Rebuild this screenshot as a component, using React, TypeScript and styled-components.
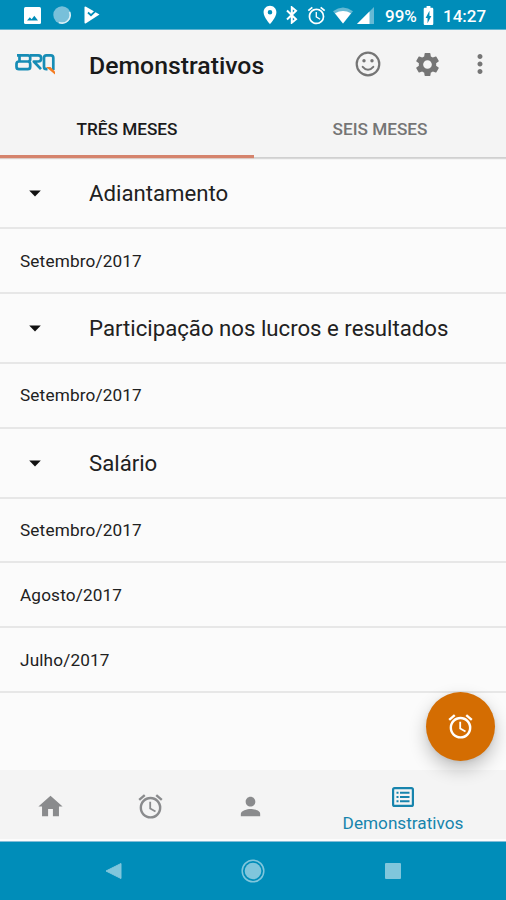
import React from "react";
import styled, { createGlobalStyle } from "styled-components";
import {
  MdAlarm,
  MdBatteryChargingFull,
  MdHome,
  MdMoreVert,
  MdPerson,
  MdPlace,
  MdSettings,
} from "react-icons/md";

const blue = "#008db9";
const bar = "#f4f4f4";

const GlobalStyle = createGlobalStyle`
  * { box-sizing: border-box; }
  body { margin: 0; background: #fafafa; font-family: Roboto, "Liberation Sans", sans-serif; }
  svg { display: block; flex: none; }
`;

const Screen = styled.div`
  position: relative;
  display: flex;
  flex-direction: column;
  width: 506px;
  height: 900px;
  overflow: hidden;
  background: #fbfbfb;
`;

const StatusBar = styled.div`
  display: flex;
  align-items: center;
  height: 30px;
  flex: none;
  padding: 1px 17px 0 24px;
  background: ${blue};
  color: #fff;
  border-bottom: 1px solid #5fb3d0;
`;

const StatusText = styled.span<{ $gap: number; $width: number }>`
  width: ${(p) => p.$width}px;
  margin-left: ${(p) => p.$gap}px;
  font-size: 17px;
  font-weight: 500;
  line-height: 20px;
  padding-top: 2px;
  white-space: nowrap;
`;

const Slot = styled.span<{ $gap?: number }>`
  display: flex;
  margin-left: ${(p) => p.$gap ?? 0}px;
`;

const Spacer = styled.span`
  flex: 1;
`;

const AppBar = styled.header`
  display: flex;
  align-items: center;
  height: 69px;
  flex: none;
  padding-left: 15px;
  padding-right: 11px;
  padding-bottom: 1px;
  background: ${bar};
  color: #757575;
`;

const Title = styled.h1`
  margin: 3px 0 0 33px;
  flex: 1;
  font-size: 24.8px;
  font-weight: 500;
  line-height: 30px;
  color: #1a1a1a;
`;

const Tabs = styled.nav`
  display: grid;
  grid-template-columns: 254px 252px;
  height: 60px;
  flex: none;
  background: ${bar};
`;

const Tab = styled.div<{ $active?: boolean }>`
  display: flex;
  flex-direction: column;
  align-items: center;
  font-size: 17.2px;
  line-height: 20px;
  padding-top: 20px;
  font-weight: 500;
  color: ${(p) => (p.$active ? "#1a1a1a" : "#757575")};
  background: linear-gradient(
    to bottom,
    transparent 56px,
    ${(p) => (p.$active ? "#d5836c" : "transparent")} 56px,
    ${(p) => (p.$active ? "#d5836c" : "transparent")} 58px,
    ${(p) => (p.$active ? "#d5836c" : "#d0d0d0")} 58px,
    ${(p) => (p.$active ? "#d5836c" : "#d0d0d0")} 59px,
    ${(p) => (p.$active ? "#dccbc5" : "#d8d8d8")} 59px
  );
`;

const List = styled.main`
  flex: 1;
  min-height: 0;
  border-top: 1px solid #f3f3f3;
`;

const GroupRow = styled.div`
  display: flex;
  align-items: center;
  height: 70px;
  padding: 1px 0 0 29px;
  font-size: 22.2px;
  color: #212121;
  border-bottom: 2px solid #e7e7e7;

  &:first-child {
    height: 69px;
    padding-top: 0;
  }
`;

const GroupName = styled.span`
  margin-left: 48px;
  padding-bottom: 1px;
`;

const MonthRow = styled.div`
  display: flex;
  align-items: center;
  height: 64.8px;
  padding: 0.4px 0 0 20px;
  font-size: 17.2px;
  letter-spacing: 0.15px;
  color: #212121;
  border-bottom: 2px solid #e7e7e7;
`;

const Fab = styled.button`
  position: absolute;
  left: 426px;
  top: 692px;
  width: 69px;
  height: 69px;
  padding: 0;
  border: 0;
  border-radius: 50%;
  display: flex;
  align-items: center;
  justify-content: center;
  background: #d46d02;
  color: #fff;
  box-shadow: 0 8px 18px rgba(0, 0, 0, 0.24), 0 1px 4px rgba(0, 0, 0, 0.08);
`;

const BottomNav = styled.nav`
  display: grid;
  grid-template-columns: 100px 100px 100px 206px;
  height: 71px;
  flex: none;
  background: ${bar};
  border-bottom: 2px solid #fcfcfc;
  color: #8a8b8d;
`;

const NavItem = styled.div<{ $active?: boolean }>`
  display: flex;
  flex-direction: column;
  align-items: center;
  justify-content: center;
  gap: 6px;
  padding-top: ${(p) => (p.$active ? 11 : 3)}px;
  font-size: 17.2px;
  line-height: 21px;
  color: ${(p) => (p.$active ? "#1784ad" : "inherit")};
`;

const SystemNav = styled.div`
  display: flex;
  align-items: center;
  justify-content: space-between;
  height: 59px;
  flex: none;
  padding: 0 104px;
  background: ${blue};
  border-top: 1px solid #83bdd8;
`;

const groups = [
  { name: "Adiantamento", months: ["Setembro/2017"] },
  { name: "Participação nos lucros e resultados", months: ["Setembro/2017"] },
  { name: "Salário", months: ["Setembro/2017", "Agosto/2017", "Julho/2017"] },
];

const PictureIcon = () => (
  <svg width="17" height="17" viewBox="0 0 17 17">
    <rect width="17" height="17" rx="1.5" fill="#fff" />
    <path d="m3 13.500 2.800-3.200 1.900 2 2.600-3.500 3.700 4.700z" fill={blue} />
  </svg>
);

const SyncDotIcon = () => (
  <svg width="18" height="18" viewBox="0 0 18 18">
    <circle cx="9" cy="9" r="8.700" fill="#78c0da" />
    <path d="M16.500 6A8 8 0 0 1 6 16.400" fill="none" stroke="#d9eff6" strokeWidth="1.600" />
  </svg>
);

const PlayCheckIcon = () => (
  <svg width="16" height="18" viewBox="0 0 16 18">
    <path d="M.5 1.500Q.5 0 2 .7L15.500 8.500 2 17.300Q.5 18 .5 16.500z" fill="#fff" />
    <path d="m4 6.500 3 2.700 5.500-5" fill="none" stroke={blue} strokeWidth="1.800" />
  </svg>
);

const BluetoothIcon = () => (
  <svg width="12" height="18" viewBox="0 0 12 18">
    <path d="m1 4.500 9 8.700L5.800 16.700V1.300L10 4.800 1 13.500" fill="none" stroke="#fff" strokeWidth="2" />
  </svg>
);

const WifiIcon = () => (
  <svg width="20" height="17" viewBox="0 0 20 17">
    <path d="M0 4.200Q10-3.200 20 4.200L10 16.500z" fill="#66b9d4" />
    <path d="M2 6.300Q10 1.500 18 6.300L10 16.500z" fill="#fff" />
  </svg>
);

const SignalIcon = () => (
  <svg width="17" height="17" viewBox="0 0 17 17">
    <path d="M17 0v17H0z" fill="#66b9d4" />
    <path d="M12.500 4.500V17H0z" fill="#fff" />
  </svg>
);

const BrqLogo = () => (
  <svg width="41" height="22" viewBox="0 0 41 22" fill="none" strokeLinejoin="round">
    <g stroke="#168cb5" strokeWidth="2.700">
      <path d="M2 2.300h11q2.200 0 2.200 2.200v1.800q0 2.200-2.200 2.200H4q-2.500 0-2.500 2.500v2.700q0 2.500 2.500 2.500h8.700q2.500 0 2.500-2.500V11q0-2.500-2.500-2.500M4.500 2.300v6" />
      <path d="M15 2.300h8.300q2.900 0 2.900 2.900 0 3.300-2.900 3.300h-4.500l7.200 7.700" />
      <path d="M38.300 17V4.800q0-2.500-2.500-2.500h-4.300q-2.500 0-2.500 2.500v8.900q0 2.500 2.500 2.500h1" />
    </g>
    <path d="M31 14h4.500l4.500 4.500V21.500z" fill="#f47b20" />
  </svg>
);

const SmileyIcon = () => (
  <svg width="26" height="26" viewBox="0 0 26 26" fill="none" stroke="currentColor" strokeLinecap="round">
    <circle cx="13" cy="13" r="11.300" strokeWidth="2.200" />
    <path d="M7.700 15.800q5.300 6 10.600 0" strokeWidth="2" />
    <circle cx="9" cy="9.800" r="1.700" fill="currentColor" stroke="none" />
    <circle cx="17" cy="9.800" r="1.700" fill="currentColor" stroke="none" />
  </svg>
);

const CaretIcon = () => (
  <svg width="12" height="7" viewBox="0 0 12 7">
    <path d="M.2.500h11.600L6 6.500z" fill="#111" />
  </svg>
);

const StatementIcon = () => (
  <svg width="22" height="20" viewBox="0 0 22 20" fill="none" stroke="currentColor">
    <rect x="1.100" y="1.100" width="19.800" height="17.800" rx="1.500" strokeWidth="2.200" />
    <path d="M4.500 5.700h2M4.500 10h2M4.500 14.300h2M8 5.700h9.500M8 10h9.500M8 14.300h9.500" strokeWidth="2" />
  </svg>
);

const BackIcon = () => (
  <svg width="18" height="18" viewBox="0 0 18 18">
    <path d="M17 1.500v15L2 9z" fill="#80c6dc" stroke="#80c6dc" strokeLinejoin="round" />
  </svg>
);

const HomeCircleIcon = () => (
  <svg width="24" height="24" viewBox="0 0 24 24">
    <circle cx="12" cy="12" r="10.800" fill="none" stroke="#80c6dc" strokeWidth="1.500" />
    <circle cx="12" cy="12" r="8.300" fill="#80c6dc" />
  </svg>
);

const RecentsIcon = () => (
  <svg width="18" height="18" viewBox="0 0 18 18">
    <rect x="1" y="1" width="16" height="16" rx="1" fill="#80c6dc" />
  </svg>
);

export default function App() {
  return (
    <Screen>
      <GlobalStyle />
      <StatusBar>
        <PictureIcon />
        <Slot $gap={12}><SyncDotIcon /></Slot>
        <Slot $gap={13}><PlayCheckIcon /></Slot>
        <Spacer />
        <Slot><MdPlace size={22} /></Slot>
        <Slot $gap={5}><BluetoothIcon /></Slot>
        <Slot $gap={8}><MdAlarm size={21} /></Slot>
        <Slot $gap={6}><WifiIcon /></Slot>
        <Slot $gap={4}><SignalIcon /></Slot>
        <StatusText $gap={11} $width={32}>99%</StatusText>
        <Slot><MdBatteryChargingFull size={23} /></Slot>
        <StatusText $gap={3} $width={46}>14:27</StatusText>
      </StatusBar>
      <AppBar>
        <BrqLogo />
        <Title>Demonstrativos</Title>
        <SmileyIcon />
        <Slot $gap={32}><MdSettings size={29} /></Slot>
        <Slot $gap={23}><MdMoreVert size={30} /></Slot>
      </AppBar>
      <Tabs>
        <Tab $active>TRÊS MESES</Tab>
        <Tab>SEIS MESES</Tab>
      </Tabs>
      <List>
        {groups.map((g) => (
          <React.Fragment key={g.name}>
            <GroupRow>
              <CaretIcon />
              <GroupName>{g.name}</GroupName>
            </GroupRow>
            {g.months.map((m) => (
              <MonthRow key={m}>{m}</MonthRow>
            ))}
          </React.Fragment>
        ))}
      </List>
      <Fab aria-label="Ponto">
        <MdAlarm size={29} />
      </Fab>
      <BottomNav>
        <NavItem><MdHome size={29} /></NavItem>
        <NavItem><MdAlarm size={29} /></NavItem>
        <NavItem><MdPerson size={29} /></NavItem>
        <NavItem $active>
          <StatementIcon />
          Demonstrativos
        </NavItem>
      </BottomNav>
      <SystemNav>
        <BackIcon />
        <HomeCircleIcon />
        <RecentsIcon />
      </SystemNav>
    </Screen>
  );
}
